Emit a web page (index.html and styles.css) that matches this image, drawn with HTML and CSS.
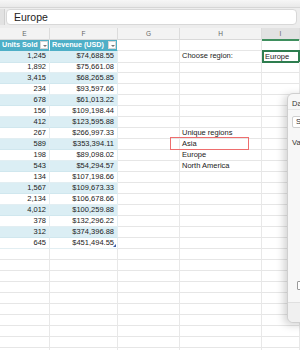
FILE: index.html
```html
<!DOCTYPE html>
<html lang="en">
<head>
    <meta charset="UTF-8">
    <meta name="viewport" content="width=device-width, initial-scale=1.0">
    <title>Sales sheet</title>
    <link rel="stylesheet" href="styles.css">
</head>
<body>
    <div class="ribbon"></div>
    <div class="formula-bar">
        <div class="name-box"></div>
        <div class="formula-input">Europe</div>
    </div>

    <div class="col-headers">
        <div>E</div><div>F</div><div>G</div><div>H</div><div class="active">I</div>
    </div>

    <div class="sheet">
        <div class="row head">
            <div class="th">Units Sold<span class="filter"></span></div>
            <div class="th">Revenue (USD)<span class="filter"></span></div>
            <div></div><div></div><div></div>
        </div>
        <div class="row band"><div class="num">1,245</div><div class="num">$74,688.55</div><div></div><div>Choose region:</div><div class="selected">Europe</div></div>
        <div class="row"><div class="num">1,892</div><div class="num">$75,661.08</div><div></div><div></div><div></div></div>
        <div class="row band"><div class="num">3,415</div><div class="num">$68,265.85</div><div></div><div></div><div></div></div>
        <div class="row"><div class="num">234</div><div class="num">$93,597.66</div><div></div><div></div><div></div></div>
        <div class="row band"><div class="num">678</div><div class="num">$61,013.22</div><div></div><div></div><div></div></div>
        <div class="row"><div class="num">156</div><div class="num">$109,198.44</div><div></div><div></div><div></div></div>
        <div class="row band"><div class="num">412</div><div class="num">$123,595.88</div><div></div><div></div><div></div></div>
        <div class="row"><div class="num">267</div><div class="num">$266,997.33</div><div></div><div>Unique regions</div><div></div></div>
        <div class="row band"><div class="num">589</div><div class="num">$353,394.11</div><div></div><div>Asia</div><div></div></div>
        <div class="row"><div class="num">198</div><div class="num">$89,098.02</div><div></div><div>Europe</div><div></div></div>
        <div class="row band"><div class="num">543</div><div class="num">$54,294.57</div><div></div><div>North America</div><div></div></div>
        <div class="row"><div class="num">134</div><div class="num">$107,198.66</div><div></div><div></div><div></div></div>
        <div class="row band"><div class="num">1,567</div><div class="num">$109,673.33</div><div></div><div></div><div></div></div>
        <div class="row"><div class="num">2,134</div><div class="num">$106,678.66</div><div></div><div></div><div></div></div>
        <div class="row band"><div class="num">4,012</div><div class="num">$100,259.88</div><div></div><div></div><div></div></div>
        <div class="row"><div class="num">378</div><div class="num">$132,296.22</div><div></div><div></div><div></div></div>
        <div class="row band"><div class="num">312</div><div class="num">$374,396.88</div><div></div><div></div><div></div></div>
        <div class="row last"><div class="num">645</div><div class="num">$451,494.55<span class="resize"></span></div><div></div><div></div><div></div></div>
        <div class="row"><div></div><div></div><div></div><div></div><div></div></div>
        <div class="row"><div></div><div></div><div></div><div></div><div></div></div>
        <div class="row"><div></div><div></div><div></div><div></div><div></div></div>
        <div class="row"><div></div><div></div><div></div><div></div><div></div></div>
        <div class="row"><div></div><div></div><div></div><div></div><div></div></div>
        <div class="row"><div></div><div></div><div></div><div></div><div></div></div>
        <div class="row"><div></div><div></div><div></div><div></div><div></div></div>
        <div class="row"><div></div><div></div><div></div><div></div><div></div></div>
        <div class="row"><div></div><div></div><div></div><div></div><div></div></div>
        <div class="row"><div></div><div></div><div></div><div></div><div></div></div>

        <!-- annotation round the first unique region -->
        <div class="highlight"></div>
    </div>

    <div class="dialog">
        <div class="dialog-title">Data Validation</div>
        <div class="tabs"><span class="tab">Settings</span></div>
        <div class="dialog-label">Validation criteria</div>
        <div class="dialog-spacer"></div>
        <div class="apply"><span class="checkbox"></span>Apply these changes</div>
        <div class="dialog-footer"></div>
    </div>
</body>
</html>
```

FILE: styles.css
```css
body {
    margin: 0;
    width: 300px;
    height: 350px;
    overflow: hidden;
    position: relative;
    background-color: #fff;
    font-family: "Liberation Sans", Arial, sans-serif;
    color: #222;
}

.ribbon {
    height: 7px;
    background: linear-gradient(#f6f6f6, #e9e9e9);
    border-bottom: 1px solid #d6d6d6;
}

.formula-bar {
    display: flex;
    height: 20px;
    box-sizing: border-box;
    padding: 1px 3px 3px 0;
    background-color: #ededed;
}

.name-box {
    width: 4px;
    background-color: #e2e2e2;
    border-right: 1px solid #d0d0d0;
}

.formula-input {
    flex: 1;
    margin-left: 1px;
    padding-left: 7px;
    background-color: #fff;
    border: 1px solid #d8d8d8;
    border-radius: 4px;
    font-size: 10.5px;
    line-height: 14px;
    color: #222;
}

.col-headers {
    display: grid;
    grid-template-columns: 50px 68px 62px 82px 38px;
    height: 12px;
    box-sizing: border-box;
    background-color: #f3f3f3;
    border-bottom: 1px solid #d9d9d9;
}

.col-headers div {
    border-right: 1px solid #dcdcdc;
    text-align: center;
    font-size: 6.5px;
    line-height: 11px;
    color: #666;
}

.col-headers .active {
    background-color: #e2e2e2;
    border-bottom: 2px solid #3f8f5e;
}

.sheet {
    position: relative;
}

.row {
    display: grid;
    grid-template-columns: 50px 68px 62px 82px 38px;
    height: 11px;
}

.row div {
    position: relative;
    box-sizing: border-box;
    border-right: 1px solid #e8e8e8;
    border-bottom: 1px solid #e6e6e6;
    padding: 0 2px;
    font-size: 7.5px;
    line-height: 10px;
    white-space: nowrap;
    overflow: visible;
}

.row .num {
    text-align: right;
    padding-right: 3px;
    border-right-color: #e4eef2;
    border-bottom-color: #e2eef2;
}

.band .num {
    background-color: #dbeef4;
    border-bottom-color: #d0e7ee;
}

.head .th {
    background-color: #4eafc7;
    color: #fff;
    font-weight: bold;
    font-size: 7.2px;
    border-right: 1px solid #fff;
    border-bottom: 1px solid #4eafc7;
}

.filter {
    position: absolute;
    right: 1px;
    top: 1px;
    width: 8px;
    height: 8px;
    background-color: #fff;
    border: 1px solid #d6d6d6;
    box-sizing: border-box;
}

.filter::after {
    content: "";
    position: absolute;
    left: 1.5px;
    top: 2.5px;
    border-left: 2px solid transparent;
    border-right: 2px solid transparent;
    border-top: 2px solid #777;
}

.resize {
    position: absolute;
    right: 1px;
    bottom: 1px;
    width: 0;
    height: 0;
    border-left: 3px solid transparent;
    border-bottom: 3px solid #3d5fa8;
}

.row .selected {
    border: 2px solid #2e7d4f;
    margin-top: -1px;
    height: 13px;
    line-height: 9px;
    padding-left: 1px;
}

.highlight {
    position: absolute;
    left: 170px;
    top: 97px;
    width: 79px;
    height: 13px;
    box-sizing: border-box;
    border: 1px solid #ee6e6e;
}

.dialog {
    position: absolute;
    left: 287px;
    top: 93px;
    width: 200px;
    height: 230px;
    box-sizing: border-box;
    display: flex;
    flex-direction: column;
    background-color: #f7f7f7;
    border: 1px solid #cfcfcf;
    border-radius: 6px;
    box-shadow: -3px 2px 8px rgba(0, 0, 0, 0.18);
    font-size: 7.5px;
    color: #333;
}

.dialog-title {
    padding: 5px 0 0 4px;
    height: 16px;
    box-sizing: border-box;
    border-bottom: 1px solid #e6e6e6;
}

.tabs {
    padding: 6px 0 0 4px;
}

.tab {
    display: inline-block;
    padding: 1px 3px;
    line-height: 8px;
    background-color: #fff;
    border: 1px solid #cfcfcf;
    border-radius: 2px;
}

.dialog-label {
    padding: 10px 0 0 4px;
}

.dialog-spacer {
    flex: 1;
}

.apply {
    display: flex;
    align-items: center;
    gap: 3px;
    padding: 0 0 12px 9px;
}

.checkbox {
    width: 7px;
    height: 7px;
    background-color: #fff;
    border: 1px solid #9a9a9a;
    border-radius: 1px;
}

.dialog-footer {
    height: 19px;
    border-top: 1px solid #e0e0e0;
    background-color: #f0f0f0;
    border-radius: 0 0 6px 6px;
}
```
